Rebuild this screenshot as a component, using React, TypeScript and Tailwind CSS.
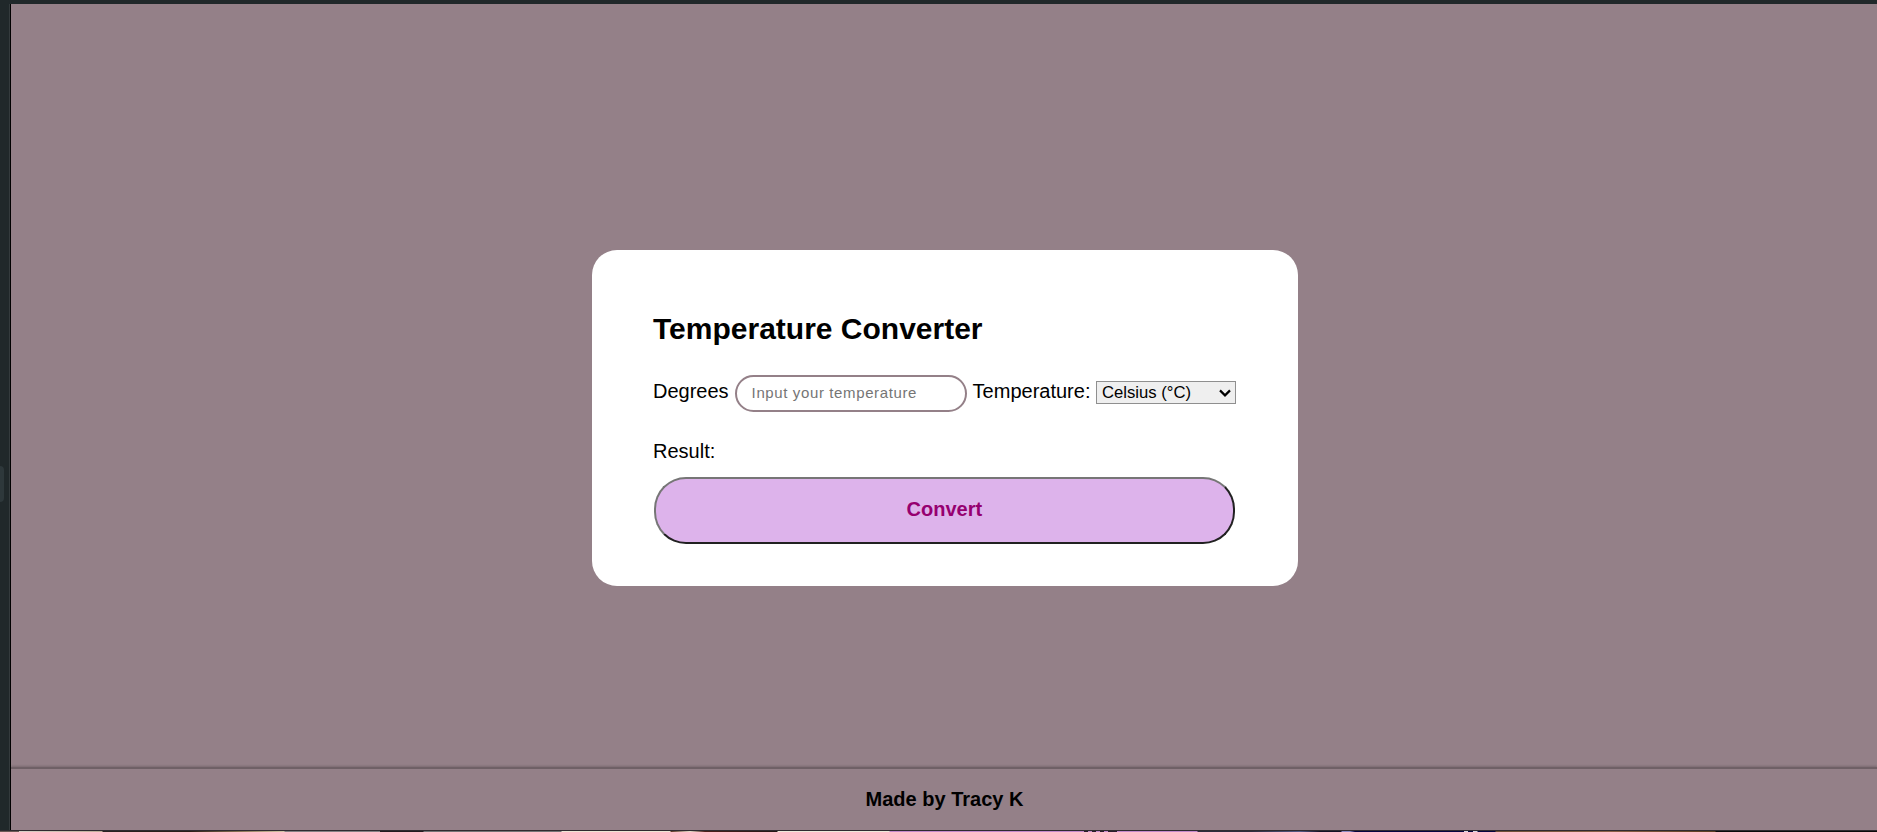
import React, { useState } from "react";

const strip =
  "linear-gradient(90deg,#6b5a55 0 19px,#d9d0c8 19px,#c0ad98 102px,#2b2322 103px,#2b1e18 190px,#8a7355 240px,#d5c7a8 284px,#858083 285px,#858083 380px,#241c20 380px 423px,#747476 424px 561px,#efe5d5 562px 670px,#5a3524 671px,#eadfce 690px,#4c201b 705px,#241817 777px,#efe8da 778px 889px,#c58acb 890px 1084px,#2b1e2c 1084px 1088px,#c58acb 1088px 1092px,#2b1e2c 1092px 1096px,#c58acb 1096px 1100px,#2b1e2c 1100px 1104px,#c58acb 1104px 1108px,#2b1e2c 1108px 1117px,#c58acb 1117px 1197px,#2e2b3a 1198px 1250px,#555c88 1300px,#151224 1320px 1341px,#8d8bc4 1342px 1350px,#06063f 1355px 1464px,#d8d8e2 1464px 1468px,#06063f 1468px 1473px,#d8d8e2 1473px 1477px,#06063f 1478px 1495px,#6d4e36 1496px,#8b6048 1610px,#5b3c20 1715px,#0c0a0b 1716px)";

export default function App() {
  const [degrees, setDegrees] = useState("");
  const [unit, setUnit] = useState("C");
  const [result, setResult] = useState("");

  const convert = () => {
    const value = parseFloat(degrees);
    if (Number.isNaN(value)) return setResult("");
    setResult(
      unit === "C"
        ? `${((value * 9) / 5 + 32).toFixed(1)} °F`
        : `${(((value - 32) * 5) / 9).toFixed(1)} °C`
    );
  };

  return (
    <div className="flex h-[832px] w-full flex-col overflow-hidden bg-[#20282a] font-['Liberation_Sans',Arial,sans-serif] text-[20px] leading-[23px] text-black">
      <div className="h-1 shrink-0" />
      <div className="flex min-h-0 flex-1">
        <aside className="flex w-[11px] shrink-0 border-r border-black">
          <div className="mt-[462px] h-[36px] w-1 rounded-r-[4px] bg-[#2e383b]" />
          <div className="ml-auto w-px bg-[#343b3d]" />
        </aside>
        <div className="flex flex-1 flex-col bg-[#948088]">
          <main className="flex h-[763px] shrink-0 pl-[580.6px]">
            <section className="mt-[246px] flex h-[335.6px] w-[706px] flex-col rounded-[25px] bg-white pt-[61px] pr-[62px] pl-[62px]">
              <h1 className="-ml-[0.6px] text-[30px] leading-[35px] font-bold">Temperature Converter</h1>
              <div className="-ml-[0.6px] mt-[29px] flex h-[37px] w-[583px] items-center whitespace-nowrap">
                <label htmlFor="degrees" className="-mt-1">Degrees</label>
                <input
                  id="degrees"
                  value={degrees}
                  onChange={(e) => setDegrees(e.target.value)}
                  placeholder="Input your temperature"
                  className="ml-[6px] h-[37px] w-[232.5px] rounded-full border-2 border-[#948088] bg-white px-[15px] pb-[2px] text-[15px] tracking-[0.62px] outline-none placeholder:text-[#757575]"
                />
                <label htmlFor="unit" className="-mt-1 ml-[5.5px]">Temperature:</label>
                <div className="-mt-[2px] ml-auto grid items-center">
                  <select
                    id="unit"
                    value={unit}
                    onChange={(e) => setUnit(e.target.value)}
                    className="col-start-1 row-start-1 h-[23px] w-[140px] appearance-none border border-[#8f8f8f] bg-[#efefef] pl-[5px] text-[16.67px] leading-[20px]"
                  >
                    <option value="C">Celsius (°C)</option>
                    <option value="F">Fahrenheit (°F)</option>
                  </select>
                  <svg
                    viewBox="0 0 12 8"
                    className="pointer-events-none col-start-1 row-start-1 mr-[5px] h-[8px] w-[12px] justify-self-end"
                    fill="none"
                    stroke="black"
                    strokeWidth="2.2"
                  >
                    <path d="M1 1.4 6 6.4 11 1.4" />
                  </svg>
                </div>
              </div>
              <p className="-ml-[0.6px] mt-[28px] leading-[23px]">Result: {result}</p>
              <button
                onClick={convert}
                className="mt-[14px] h-[66.7px] w-[581.5px] rounded-[32px] border-2 border-t-[#767676] border-r-[#212121] border-b-[#212121] border-l-[#767676] bg-[#ddb3eb] pb-[2px] text-[20px] font-bold text-[#960070]"
              >
                Convert
              </button>
            </section>
          </main>
          <footer className="flex flex-1 items-center justify-center border-t-2 border-[#6f6066] pl-px font-bold shadow-[0_-1px_2px_rgba(0,0,0,0.18)]">
            Made by Tracy K
          </footer>
        </div>
      </div>
      <div className="h-px shrink-0 bg-[#302b30]" />
      <div className="h-px shrink-0" style={{ background: strip }} />
    </div>
  );
}
